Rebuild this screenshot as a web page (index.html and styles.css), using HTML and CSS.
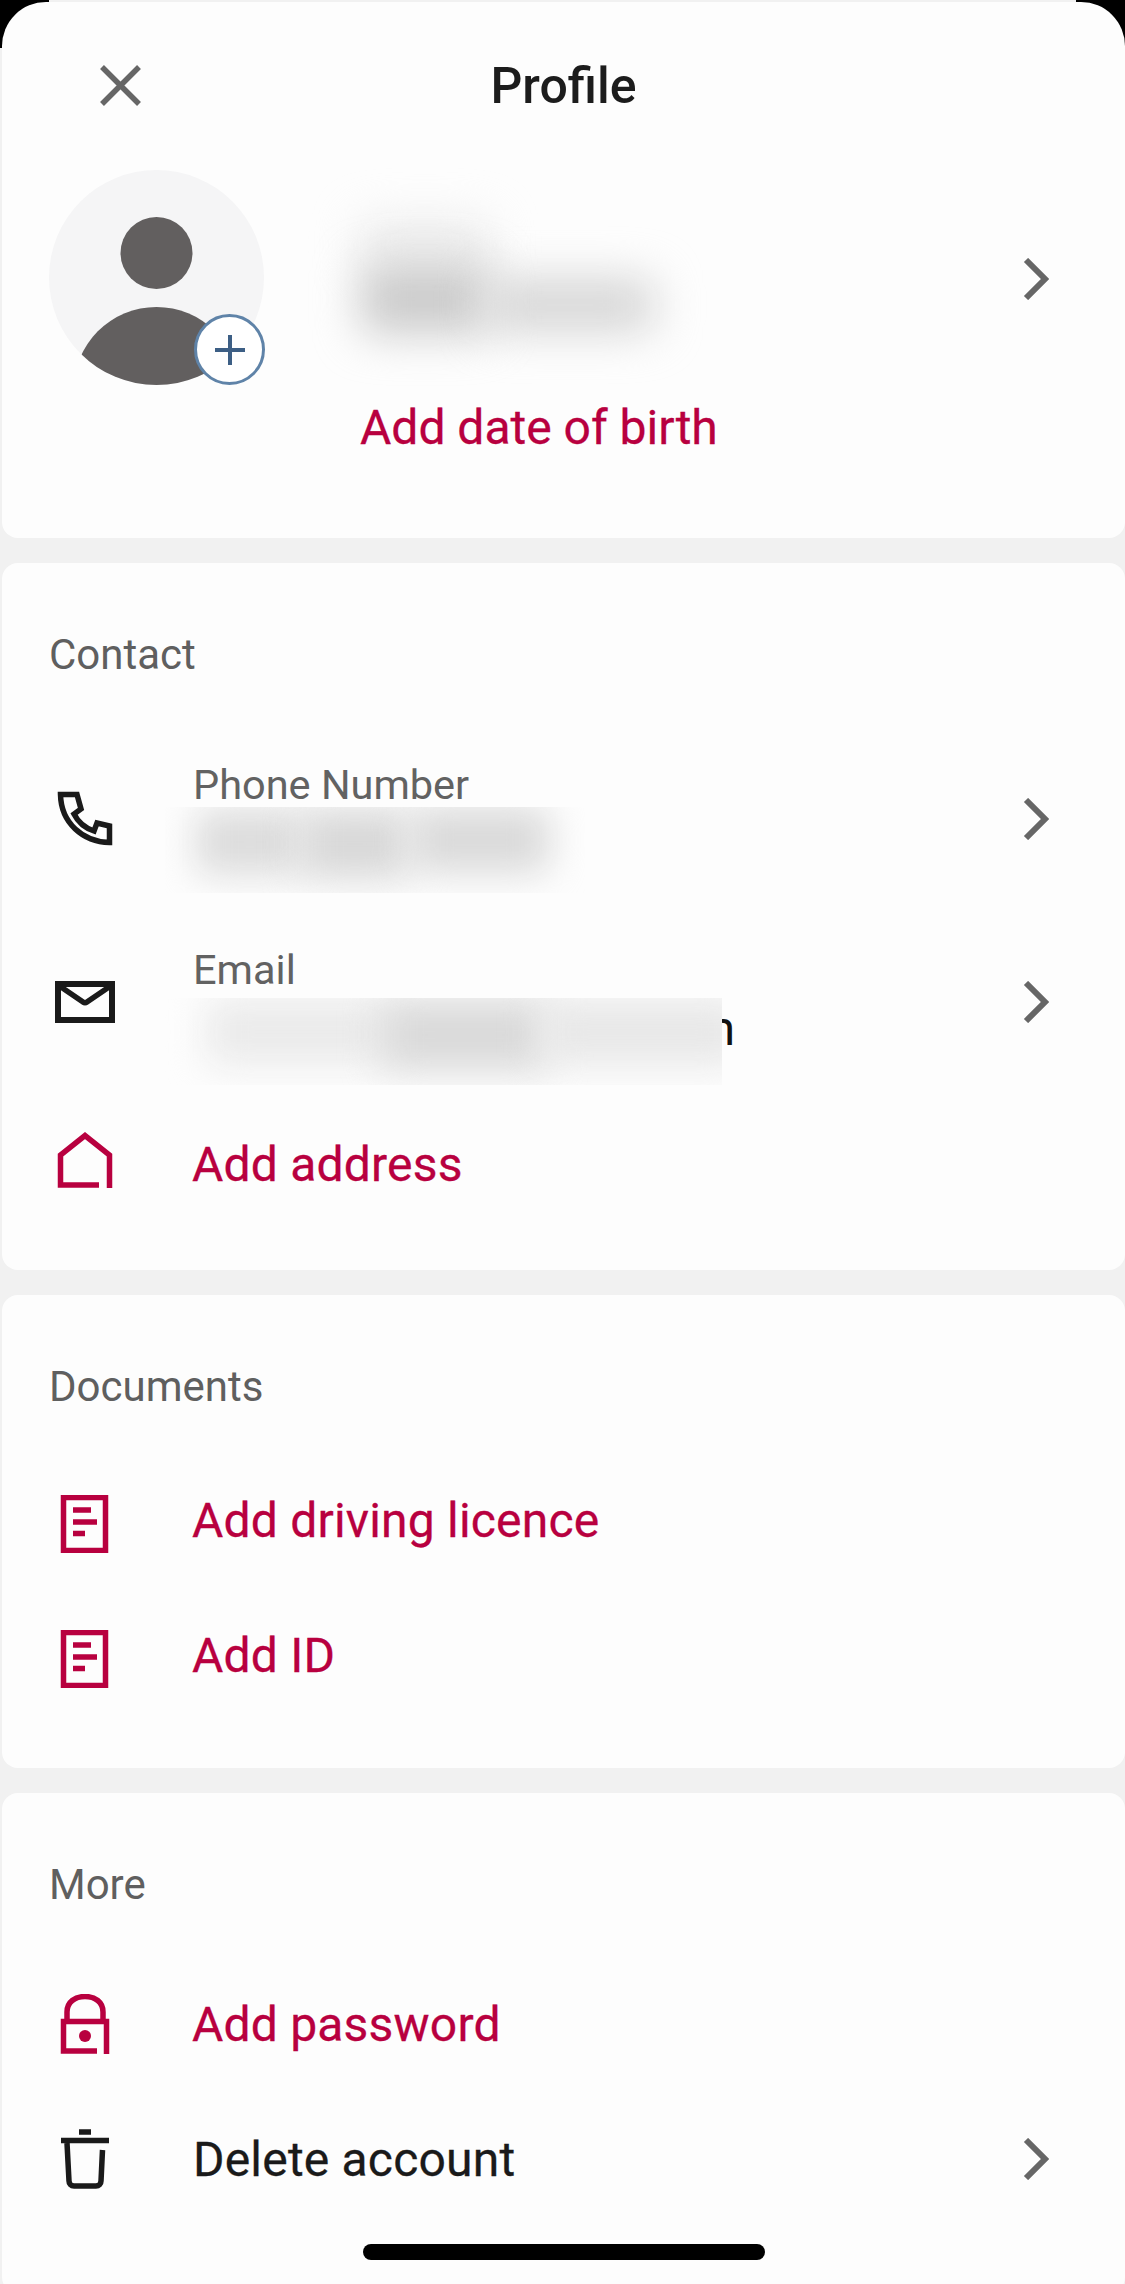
FILE: index.html
```html
<!DOCTYPE html>
<html lang="en">
<head>
    <meta charset="UTF-8"/>
    <meta name="viewport" content="width=device-width, initial-scale=1.0"/>
    <title>Profile</title>
    <link rel="stylesheet" href="styles.css">
</head>
<body>
<div class="screen-corner corner-left"></div>
<div class="screen-corner corner-right"></div>

<div class="sheet">
    <section class="card card-profile">
        <header class="title-bar">
            <svg class="close-icon" viewBox="0 0 41 41" width="41" height="41">
                <path d="M2 2L39 39M39 2L2 39" fill="none" stroke="#666" stroke-width="5.500"/>
            </svg>
            <h1 class="page-title">Profile</h1>
        </header>
        <div class="profile-row">
            <div class="avatar">
                <svg viewBox="0 0 215 215" width="215" height="215">
                    <circle cx="107.5" cy="107.5" r="107.5" fill="#f5f5f6"/>
                    <ellipse cx="107.5" cy="83" rx="36" ry="36" fill="#625f5f"/>
                    <clipPath id="avatar-clip"><circle cx="107.5" cy="107.5" r="107.5"/></clipPath>
                    <circle cx="107.5" cy="220" r="83" fill="#625f5f" clip-path="url(#avatar-clip)"/>
                </svg>
                <div class="avatar-add">
                    <svg viewBox="0 0 30 30" width="30" height="30">
                        <path d="M15 0V30M0 15H30" fill="none" stroke="#3d5f85" stroke-width="4"/>
                    </svg>
                </div>
            </div>
            <div class="profile-text">
                <div class="name-blur">
                    <span class="blob blob-name-top"></span>
                    <span class="blob blob-name-first"></span>
                    <span class="blob blob-name-last"></span>
                </div>
                <div class="link-text">Add date of birth</div>
            </div>
            <svg class="chevron chevron-profile" viewBox="0 0 26 42" width="26" height="42">
                <path d="M3 2L22 21L3 40" fill="none" stroke="#666" stroke-width="6"/>
            </svg>
        </div>
    </section>

    <section class="card card-contact">
        <h2 class="section-title">Contact</h2>
        <div class="row row-phone">
            <svg class="row-icon" viewBox="0 0 60 60" width="60" height="60">
                <path d="M5.500 5.500H22L26 20L19 25C23 33 30 39 39 42L42 34L54.500 37V53.500C28 53 6 34 5.500 5.500Z" fill="none" stroke="#1a1a1a" stroke-width="5.500"/>
            </svg>
            <div class="detail">
                <div class="detail-label">Phone Number</div>
                <div class="detail-value"></div>
                <div class="value-blur blur-phone">
                    <span class="blob blob-phone-a"></span>
                    <span class="blob blob-phone-b"></span>
                    <span class="blob blob-phone-c"></span>
                </div>
            </div>
            <svg class="chevron" viewBox="0 0 26 42" width="26" height="42">
                <path d="M3 2L22 21L3 40" fill="none" stroke="#666" stroke-width="6"/>
            </svg>
        </div>
        <div class="row row-email">
            <svg class="row-icon" viewBox="0 0 60 42" width="60" height="42">
                <path d="M3 3H57V39H3Z" fill="none" stroke="#1a1a1a" stroke-width="6"/>
                <path d="M6 6L28 21Q30 22.500 32 21L54 6" fill="none" stroke="#1a1a1a" stroke-width="5.500"/>
            </svg>
            <div class="detail">
                <div class="detail-label">Email</div>
                <div class="detail-value email-value">m</div>
                <div class="value-blur blur-email">
                    <span class="blob blob-email-a"></span>
                    <span class="blob blob-email-b"></span>
                    <span class="blob blob-email-c"></span>
                </div>
            </div>
            <svg class="chevron" viewBox="0 0 26 42" width="26" height="42">
                <path d="M3 2L22 21L3 40" fill="none" stroke="#666" stroke-width="6"/>
            </svg>
        </div>
        <div class="row row-address">
            <svg class="row-icon home-icon" viewBox="0 0 60 58" width="60" height="58">
                <path d="M44 53H5.500V23L30 3.500L54.500 23V56" fill="none" stroke="#b8003f" stroke-width="5.500"/>
            </svg>
            <div class="link-text">Add address</div>
        </div>
    </section>

    <section class="card card-documents">
        <h2 class="section-title">Documents</h2>
        <div class="row row-licence">
            <svg class="row-icon doc-icon" viewBox="0 0 60 58" width="60" height="58">
                <path d="M8.500 2.500H50.500V55.500H8.500Z" fill="none" stroke="#b8003f" stroke-width="5.500"/>
                <path d="M18 15H36M18 27H42M18 38.500H30" fill="none" stroke="#b8003f" stroke-width="5.500"/>
            </svg>
            <div class="link-text">Add driving licence</div>
        </div>
        <div class="row row-id">
            <svg class="row-icon doc-icon" viewBox="0 0 60 58" width="60" height="58">
                <path d="M8.500 2.500H50.500V55.500H8.500Z" fill="none" stroke="#b8003f" stroke-width="5.500"/>
                <path d="M18 15H36M18 27H42M18 38.500H30" fill="none" stroke="#b8003f" stroke-width="5.500"/>
            </svg>
            <div class="link-text">Add ID</div>
        </div>
    </section>

    <section class="card card-more">
        <h2 class="section-title">More</h2>
        <div class="row row-password">
            <svg class="row-icon" viewBox="0 0 60 60" width="60" height="60">
                <path d="M12 25V18C12 8 20 2.500 30 2.500C40 2.500 48 8 48 18V25" fill="none" stroke="#b8003f" stroke-width="5.500"/>
                <path d="M42 57H8.500V27.500H51.500V60" fill="none" stroke="#b8003f" stroke-width="5.500"/>
                <circle cx="30" cy="42" r="6" fill="#b8003f"/>
            </svg>
            <div class="link-text">Add password</div>
        </div>
        <div class="row row-delete">
            <svg class="row-icon" viewBox="0 0 60 60" width="60" height="60">
                <path d="M24 3H36M6 11.500H54" fill="none" stroke="#1a1a1a" stroke-width="5.500"/>
                <path d="M12 14L14 52C14 55 16 57 19 57H41C44 57 46 55 46 52L47.500 21" fill="none" stroke="#1a1a1a" stroke-width="5.500"/>
            </svg>
            <div class="row-text">Delete account</div>
            <svg class="chevron" viewBox="0 0 26 42" width="26" height="42">
                <path d="M3 2L22 21L3 40" fill="none" stroke="#666" stroke-width="6"/>
            </svg>
        </div>
        <div class="home-bar"></div>
    </section>
</div>
</body>
</html>
```

FILE: styles.css
```css
* {
    box-sizing: border-box;
}

body {
    margin: 0;
    height: 2284px;
    overflow: hidden;
    background-color: #f1f1f1;
    font-family: Roboto, "Liberation Sans", sans-serif;
}

.screen-corner {
    position: absolute;
    top: 0;
    width: 49px;
    height: 48px;
    background-color: #000;
}

.corner-left {
    left: 0;
}

.corner-right {
    right: 0;
}

.sheet {
    position: relative;
    display: flex;
    flex-direction: column;
    gap: 25px;
    padding: 2px 0 0 2px;
}

.card {
    background-color: #fdfdfd;
    border-radius: 16px;
    padding: 65px 0 66px 53px;
}

.card-profile {
    height: 536px;
    padding: 0;
    border-radius: 44px 44px 16px 16px;
}

.title-bar {
    position: relative;
    height: 168px;
    display: flex;
    align-items: center;
    justify-content: center;
}

.close-icon {
    position: absolute;
    left: 98px;
    top: 63px;
}

.page-title {
    margin: 0;
    font-size: 50px;
    font-weight: 500;
    color: #1c1c1c;
}

.profile-row {
    display: flex;
    align-items: flex-start;
    padding-left: 47px;
}

.avatar {
    position: relative;
    width: 215px;
    height: 215px;
    flex: none;
}

.avatar-add {
    position: absolute;
    right: -1px;
    bottom: 0;
    width: 71px;
    height: 71px;
    border-radius: 50%;
    border: 3px solid #5f83a8;
    background-color: #fff;
    display: flex;
    align-items: center;
    justify-content: center;
}

.profile-text {
    flex: 1;
    padding-left: 96px;
}

.name-blur {
    position: relative;
    height: 188px;
}

.blob {
    position: absolute;
    display: block;
    filter: blur(18px);
    border-radius: 14px;
}

.blob-name-top {
    left: 0;
    top: 50px;
    width: 130px;
    height: 50px;
    background-color: #ececec;
    filter: blur(22px);
}

.blob-name-first {
    left: 0;
    top: 94px;
    width: 130px;
    height: 70px;
    background-color: #cbcbcb;
    filter: blur(22px);
}

.blob-name-last {
    left: 125px;
    top: 108px;
    width: 170px;
    height: 54px;
    background-color: #d6d6d6;
    filter: blur(22px);
}

.link-text {
    margin-top: 43px;
    padding-top: 2px;
    font-size: 48px;
    line-height: 50px;
    color: #b8003f;
    -webkit-text-stroke: 0.3px #b8003f;
}

.row .link-text {
    margin-top: 0;
    margin-left: -1px;
    letter-spacing: 0.2px;
}

.chevron {
    flex: none;
    margin-left: auto;
    margin-right: 76px;
}

.chevron-profile {
    margin-top: 88px;
}

.section-title {
    height: 50px;
    margin: 0 0 0 -6px;
    padding-top: 2px;
    font-size: 42px;
    line-height: 50px;
    font-weight: 400;
    color: #5f5f5f;
}

.row {
    display: flex;
    align-items: center;
    gap: 78px;
    height: 80px;
}

.row-icon {
    flex: none;
}

.home-icon {
    margin-bottom: 6px;
}

.doc-icon {
    margin-top: 8px;
}

.row-phone {
    height: 114px;
    margin-top: 84px;
}

.row-email {
    height: 110px;
    margin-top: 71px;
}

.row-address {
    margin-top: 67px;
}

.card-documents {
    padding-bottom: 73px;
}

.row-licence {
    margin-top: 70px;
}

.row-id {
    margin-top: 55px;
}

.row-password {
    margin-top: 76px;
}

.row-delete {
    margin-top: 55px;
}

.row-text {
    padding-top: 2px;
    font-size: 48px;
    line-height: 50px;
    letter-spacing: 0.2px;
    color: #1a1a1a;
    -webkit-text-stroke: 0.3px #1a1a1a;
}

.detail {
    position: relative;
    align-self: flex-start;
    flex: 1;
}

.detail-label {
    font-size: 41.5px;
    line-height: 46px;
    color: #626262;
}

.detail-value {
    font-size: 48px;
    line-height: 72px;
    color: #111;
}

.email-value {
    width: 542px;
    text-align: right;
}

.value-blur {
    position: absolute;
    left: -28px;
    overflow: hidden;
    background-color: #fdfdfd;
}

.blur-phone {
    top: 45px;
    width: 420px;
    height: 86px;
}

.blur-email {
    top: 51px;
    width: 557px;
    height: 87px;
}

.blob-phone-a {
    left: 30px;
    top: 2px;
    width: 110px;
    height: 66px;
    background-color: #dcdcdc;
}

.blob-phone-b {
    left: 135px;
    top: 2px;
    width: 110px;
    height: 70px;
    background-color: #d8d8d8;
}

.blob-phone-c {
    left: 245px;
    top: 0;
    width: 140px;
    height: 66px;
    background-color: #dadada;
}

.blob-email-a {
    left: 40px;
    top: 0;
    width: 190px;
    height: 68px;
    background-color: #ebebeb;
}

.blob-email-b {
    left: 215px;
    top: 0;
    width: 170px;
    height: 74px;
    background-color: #dadada;
}

.blob-email-c {
    left: 375px;
    top: 0;
    width: 205px;
    height: 68px;
    background-color: #e8e8e8;
}

.card-more {
    padding-bottom: 0;
    height: 500px;
}

.home-bar {
    width: 402px;
    height: 16px;
    margin: 45px 0 0 308px;
    border-radius: 8px;
    background-color: #000;
}
```
